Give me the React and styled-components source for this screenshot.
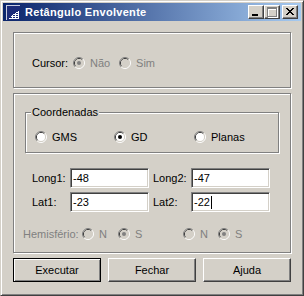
import React from "react";
import styled, { createGlobalStyle } from "styled-components";

const GlobalStyle = createGlobalStyle`
  body {
    margin: 0;
    font-family: "Liberation Sans", Arial, sans-serif;
    font-size: 11px;
    color: #000;
  }
`;

const Radio = ({ checked, disabled }) => (
  <svg width="12" height="12" viewBox="0 0 12 12">
    <path d="M2.11 9.89A5.5 5.5 0 0 1 9.89 2.11" stroke="#808080" fill="none" />
    <path d="M9.89 2.11A5.5 5.5 0 0 1 2.11 9.89" stroke="#fff" fill="none" />
    <path d="M2.82 9.18A4.5 4.5 0 0 1 9.18 2.82" stroke="#404040" fill="none" />
    <path d="M9.18 2.82A4.5 4.5 0 0 1 2.82 9.18" stroke="#d4d0c8" fill="none" />
    <circle cx="6" cy="6" r="4" fill={disabled ? "#d4d0c8" : "#fff"} />
    {checked && (
      <circle cx="6" cy="6" r="2" fill={disabled ? "#808080" : "#000"} />
    )}
  </svg>
);

const Option = ({ label, checked, disabled, width }) => (
  <OptionLabel $width={width} $disabled={disabled}>
    <Radio checked={checked} disabled={disabled} />
    <span>{label}</span>
  </OptionLabel>
);

const AppIcon = () => (
  <svg width="16" height="16" viewBox="0 0 16 16" shapeRendering="crispEdges">
    <rect x="1" y="1" width="14" height="15" fill="#1d2c78" />
    <path d="M1 1.5H15M1.5 1V16" stroke="#c8cce0" />
    <path
      d="M11 8.5H14M8 10.5H14M6 12.5H14M4 14.5H14M13.5 7V15M10.5 9V15M7.5 11V15"
      stroke="#fff"
    />
  </svg>
);

const MinGlyph = () => (
  <svg width="14" height="12" viewBox="0 0 14 12" shapeRendering="crispEdges">
    <rect x="3" y="8" width="6" height="2" fill="#000" />
  </svg>
);

const MaxGlyph = () => (
  <svg width="14" height="12" viewBox="0 0 14 12" shapeRendering="crispEdges">
    <path d="M4 2.5H12.5V11.5H3.5V2M4 3.5H12" stroke="#fff" fill="none" />
    <path d="M3 1.5H11.5V10.5H2.5V1M3 2.5H11" stroke="#808080" fill="none" />
  </svg>
);

const CloseGlyph = () => (
  <svg width="14" height="12" viewBox="0 0 14 12" shapeRendering="crispEdges">
    {[0, 1, 2, 3, 4, 5, 6].map((i) => (
      <g key={i} fill="#000">
        <rect x={3 + i} y={2 + i} width="2" height="1" />
        <rect x={9 - i} y={2 + i} width="2" height="1" />
      </g>
    ))}
  </svg>
);

const App = () => {
  return (
    <>
      <GlobalStyle />
      <Window>
        <TitleBar>
          <AppIcon />
          <Title>Retângulo Envolvente</Title>
          <Controls>
            <CaptionButton>
              <MinGlyph />
            </CaptionButton>
            <CaptionButton>
              <MaxGlyph />
            </CaptionButton>
            <CaptionButton $gap>
              <CloseGlyph />
            </CaptionButton>
          </Controls>
        </TitleBar>

        <Body>
          <Panel $height={56}>
            <CursorRow>
              <Caption>Cursor:</Caption>
              <Option label="Não" checked disabled width={46} />
              <Option label="Sim" disabled />
            </CursorRow>
          </Panel>

          <Panel $height={160} $top={5}>
            <Group>
              <Legend>Coordenadas</Legend>
              <OptionGrid>
                <Option label="GMS" />
                <Option label="GD" checked />
                <Option label="Planas" />
              </OptionGrid>
            </Group>

            <Fields>
              <FieldRow>
                <Field>
                  <FieldLabel>Long1:</FieldLabel>
                  <Edit>-48</Edit>
                </Field>
                <Field>
                  <FieldLabel>Long2:</FieldLabel>
                  <Edit>-47</Edit>
                </Field>
              </FieldRow>
              <FieldRow>
                <Field>
                  <FieldLabel>Lat1:</FieldLabel>
                  <Edit>-23</Edit>
                </Field>
                <Field>
                  <FieldLabel>Lat2:</FieldLabel>
                  <Edit>
                    -22
                    <Caret />
                  </Edit>
                </Field>
              </FieldRow>
            </Fields>

            <HemRow>
              <HemLabel>Hemisfério:</HemLabel>
              <Option label="N" disabled width={36} />
              <Option label="S" checked disabled width={65} />
              <Option label="N" disabled width={35} />
              <Option label="S" checked disabled />
            </HemRow>
          </Panel>

          <ButtonRow>
            <PushButton $default>Executar</PushButton>
            <PushButton>Fechar</PushButton>
            <PushButton>Ajuda</PushButton>
          </ButtonRow>
        </Body>
      </Window>
    </>
  );
};

const Window = styled.div`
  width: 304px;
  height: 296px;
  box-sizing: border-box;
  padding: 2px;
  background: #d4d0c8;
  border: 1px solid;
  border-color: #d4d0c8 #404040 #404040 #d4d0c8;
  box-shadow: inset 1px 1px 0 #fff, inset -1px -1px 0 #808080;
  display: flex;
  flex-direction: column;
`;

const TitleBar = styled.div`
  height: 18px;
  display: flex;
  align-items: center;
  padding: 0 3px 0 2px;
  background: linear-gradient(to right, #0a246a, #a6caf0);
`;

const Title = styled.span`
  margin-left: 4px;
  color: #fff;
  font-weight: bold;
  letter-spacing: 0.3px;
  white-space: nowrap;
`;

const Controls = styled.div`
  margin-left: auto;
  display: flex;
`;

const CaptionButton = styled.div`
  width: 16px;
  height: 14px;
  box-sizing: border-box;
  margin-left: ${({ $gap }) => ($gap ? "2px" : "0")};
  background: #d4d0c8;
  border: 1px solid;
  border-color: #fff #404040 #404040 #fff;
  box-shadow: inset -1px -1px 0 #808080;
  display: flex;

  svg {
    display: block;
  }
`;

const Body = styled.div`
  padding: 11px 10px 0;
  display: flex;
  flex-direction: column;
`;

const Panel = styled.div`
  height: ${({ $height }) => $height}px;
  margin-top: ${({ $top }) => $top || 0}px;
  box-sizing: border-box;
  border: 1px solid #808080;
  box-shadow: 1px 1px 0 #fff, inset 1px 1px 0 #fff;
  padding-top: 11px;
`;

const CursorRow = styled.div`
  display: flex;
  align-items: center;
  height: 13px;
  margin: 12px 0 0 18px;
`;

const Caption = styled.span`
  margin-right: 5px;
`;

const OptionLabel = styled.label`
  display: flex;
  align-items: center;
  gap: 5px;
  width: ${({ $width }) => ($width ? `${$width}px` : "auto")};
  height: 13px;
  color: ${({ $disabled }) => ($disabled ? "#808080" : "#000")};

  svg {
    flex: none;
  }
`;

const Group = styled.fieldset`
  margin: 0 0 0 11px;
  width: 254px;
  box-sizing: border-box;
  min-width: 0;
  padding: 11px 0 9px 9px;
  border: 1px solid #808080;
  box-shadow: 1px 1px 0 #fff, inset 1px 1px 0 #fff;
`;

const Legend = styled.legend`
  margin-left: -4px;
  padding: 0 1px;
  line-height: 14px;
  background: #d4d0c8;
`;

const OptionGrid = styled.div`
  display: grid;
  grid-template-columns: 79px 80px auto;
  height: 13px;
`;

const Fields = styled.div`
  margin: 15px 0 0 18px;
  display: flex;
  flex-direction: column;
  gap: 4px;
`;

const FieldRow = styled.div`
  display: flex;
  gap: 4px;
`;

const Field = styled.div`
  display: flex;
  align-items: center;
`;

const FieldLabel = styled.span`
  width: 38px;
`;

const Edit = styled.div`
  width: 79px;
  height: 20px;
  box-sizing: border-box;
  padding-left: 2px;
  display: flex;
  align-items: center;
  background: #fff;
  border: 1px solid;
  border-color: #808080 #fff #fff #808080;
  box-shadow: inset 1px 1px 0 #404040, inset -1px -1px 0 #d4d0c8;
`;

const Caret = styled.span`
  width: 1px;
  height: 13px;
  margin-left: 1px;
  background: #000;
`;

const HemRow = styled.div`
  margin: 15px 0 0 9px;
  display: flex;
  align-items: center;
  height: 13px;
`;

const HemLabel = styled.span`
  width: 59px;
  color: #808080;
`;

const ButtonRow = styled.div`
  margin-top: 5px;
  display: flex;
  gap: 7px;
`;

const PushButton = styled.button`
  width: 88px;
  height: 24px;
  box-sizing: border-box;
  padding: 0;
  font: inherit;
  color: #000;
  background: #d4d0c8;
  border: 1px solid;
  border-color: ${({ $default }) =>
    $default ? "#000" : "#fff #404040 #404040 #fff"};
  box-shadow: ${({ $default }) =>
    $default
      ? "inset 1px 1px 0 #fff, inset -1px -1px 0 #808080"
      : "inset -1px -1px 0 #808080"};
`;

export default App;
